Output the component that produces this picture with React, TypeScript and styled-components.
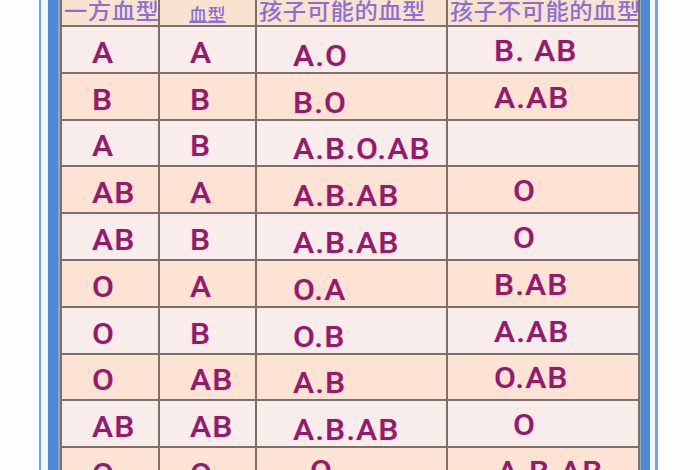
import React from "react";
import styled, { createGlobalStyle } from "styled-components";

const GlobalStyle = createGlobalStyle`
  html, body {
    margin: 0;
    padding: 0;
    background: #fcfdff;
    overflow: hidden;
  }
`;

const Page = styled.div`
  display: flex;
  height: 470px;
  overflow: hidden;
  padding-left: 39px;
`;

const OuterFrame = styled.div`
  display: flex;
  border-left: 2px solid #78a4dc;
  border-right: 3px solid #7f9fd6;
  padding: 0 5px 0 7px;
  background: #f2f7fd;
`;

const BlueBand = styled.div`
  display: flex;
  border-left: 10px solid #4c89d6;
  border-right: 9px solid #4d8ad8;
  padding: 0 1px 0 2px;
  background: #97a3c6;
`;

const Table = styled.div`
  display: grid;
  grid-template-columns: 96px 95px 189px 190px;
  grid-template-rows: 25px repeat(10, 44.8px);
  gap: 2px;
  padding: 0 2px 2px 2px;
  background: #7d706a;
  align-self: flex-start;
`;

const HeaderCell = styled.div<{ $small?: boolean }>`
  background: #f9e2d0;
  display: flex;
  align-items: flex-end;
  overflow: hidden;
  padding-left: ${(p) => (p.$small ? "29px" : "2px")};
  padding-bottom: ${(p) => (p.$small ? "3px" : "5px")};
`;

const HeaderText = styled.span<{ $small?: boolean }>`
  display: inline-block;
  font-family: "Noto Sans CJK SC", "Noto Sans", sans-serif;
  font-weight: 500;
  font-size: ${(p) => (p.$small ? "17px" : "22px")};
  line-height: 1;
  color: #8b6fd2;
  white-space: nowrap;
  transform: scaleX(1.06);
  transform-origin: left center;
  text-decoration: ${(p) => (p.$small ? "underline" : "none")};
  text-underline-offset: 1px;
  letter-spacing: 0.5px;
`;

const Cell = styled.div<{ $tone: "light" | "peach"; $pad: number; $dy: number }>`
  background: ${(p) => (p.$tone === "light" ? "#f8edea" : "#fce3d3")};
  display: flex;
  align-items: center;
  padding-left: ${(p) => p.$pad}px;
  padding-top: ${(p) => p.$dy}px;
  box-sizing: border-box;
  overflow: hidden;
`;

const Value = styled.span`
  display: inline-block;
  font-family: "Roboto", "Liberation Sans", sans-serif;
  font-weight: 500;
  font-size: 30px;
  line-height: 1;
  color: #941a6b;
  letter-spacing: 1px;
  white-space: pre;
  transform: scaleX(1.06);
  transform-origin: left center;
  text-shadow: 0 0 1px rgba(230, 90, 180, 0.55);
`;

type Row = {
  a: string;
  b: string;
  c: string;
  d: string;
  dPad?: number;
  cPad?: number;
  cDy?: number;
};

const rows: Row[] = [
  { a: "A", b: "A", c: "A.O", d: "B. AB" },
  { a: "B", b: "B", c: "B.O", d: "A.AB" },
  { a: "A", b: "B", c: "A.B.O.AB", d: "" },
  { a: "AB", b: "A", c: "A.B.AB", d: "O", dPad: 65 },
  { a: "AB", b: "B", c: "A.B.AB", d: "O", dPad: 65 },
  { a: "O", b: "A", c: "O.A", d: "B.AB" },
  { a: "O", b: "B", c: "O.B", d: "A.AB" },
  { a: "O", b: "AB", c: "A.B", d: "O.AB" },
  { a: "AB", b: "AB", c: "A.B.AB", d: "O", dPad: 65 },
  { a: "O", b: "O", c: "O", d: "A.B.AB", cPad: 53, cDy: 0, dPad: 49 },
];

export default function App() {
  return (
    <>
      <GlobalStyle />
      <Page>
        <OuterFrame>
          <BlueBand>
            <Table>
              <HeaderCell>
                <HeaderText>一方血型</HeaderText>
              </HeaderCell>
              <HeaderCell $small>
                <HeaderText $small>血型</HeaderText>
              </HeaderCell>
              <HeaderCell>
                <HeaderText>孩子可能的血型</HeaderText>
              </HeaderCell>
              <HeaderCell>
                <HeaderText>孩子不可能的血型</HeaderText>
              </HeaderCell>
              {rows.map((r, i) => {
                const tone = i % 2 === 0 ? "light" : "peach";
                return (
                  <React.Fragment key={i}>
                    <Cell $tone={tone} $pad={30} $dy={7}>
                      <Value>{r.a}</Value>
                    </Cell>
                    <Cell $tone={tone} $pad={30} $dy={7}>
                      <Value>{r.b}</Value>
                    </Cell>
                    <Cell $tone={tone} $pad={r.cPad ?? 36} $dy={r.cDy ?? 13}>
                      <Value>{r.c}</Value>
                    </Cell>
                    <Cell $tone={tone} $pad={r.dPad ?? 46} $dy={3}>
                      <Value>{r.d}</Value>
                    </Cell>
                  </React.Fragment>
                );
              })}
            </Table>
          </BlueBand>
        </OuterFrame>
      </Page>
    </>
  );
}
